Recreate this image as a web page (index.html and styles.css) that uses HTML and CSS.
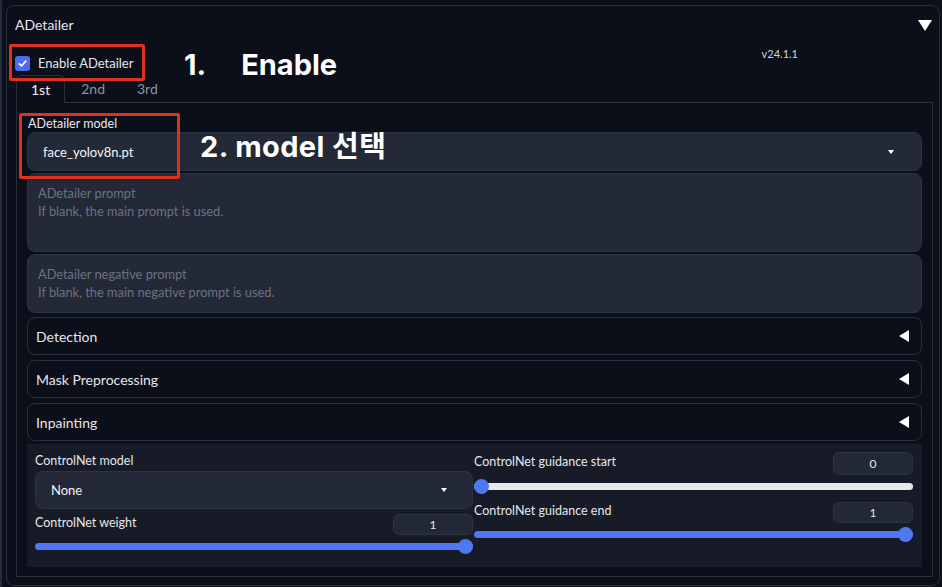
FILE: index.html
```html
<!DOCTYPE html>
<html lang="en">
<head>
<meta charset="utf-8">
<title>ADetailer</title>
<link rel="stylesheet" href="styles.css">
</head>
<body>
<div class="frame">
  <div class="panel">
    <div class="panel-head">
      <span class="panel-title">ADetailer</span>
      <span class="tri-down"></span>
    </div>
    <div class="enable-row">
      <label class="chk">
        <span class="chk-box"><svg width="11" height="11" viewBox="0 0 12 12"><path d="M2.5 6.3 L5 8.6 L9.6 3.4" fill="none" stroke="#fff" stroke-width="1.8" stroke-linecap="round" stroke-linejoin="round"/></svg></span>
        <span>Enable ADetailer</span>
      </label>
      <span class="ver">v24.1.1</span>
    </div>
    <div class="tabs">
      <div class="tab-nav">
        <div class="tab active">1st</div>
        <div class="tab">2nd</div>
        <div class="tab">3rd</div>
        <div class="tab-fill"></div>
      </div>
      <div class="tab-body">
        <div class="field-label">ADetailer model</div>
        <div class="dropdown big">
          <span>face_yolov8n.pt</span>
          <span class="dd-arrow"></span>
        </div>
        <div class="textarea tall">
          <div>ADetailer prompt</div>
          <div>If blank, the main prompt is used.</div>
        </div>
        <div class="textarea short">
          <div>ADetailer negative prompt</div>
          <div>If blank, the main negative prompt is used.</div>
        </div>
        <div class="accordion"><span>Detection</span><span class="tri-left"></span></div>
        <div class="accordion"><span>Mask Preprocessing</span><span class="tri-left"></span></div>
        <div class="accordion"><span>Inpainting</span><span class="tri-left"></span></div>
        <div class="cn-block">
          <div class="cn-col left">
            <div class="field-label cn-label">ControlNet model</div>
            <div class="dropdown small">
              <span>None</span>
              <span class="dd-arrow"></span>
            </div>
            <div class="num-row w-row">
              <span class="field-label">ControlNet weight</span>
              <span class="num-box">1</span>
            </div>
            <div class="slider">
              <div class="track blue"></div>
              <span class="thumb" style="left: 100%"></span>
            </div>
          </div>
          <div class="cn-col right">
            <div class="num-row s-row">
              <span class="field-label">ControlNet guidance start</span>
              <span class="num-box tall-box">0</span>
            </div>
            <div class="slider">
              <div class="track white"></div>
              <span class="thumb" style="left: 0%"></span>
            </div>
            <div class="num-row e-row">
              <span class="field-label">ControlNet guidance end</span>
              <span class="num-box">1</span>
            </div>
            <div class="slider">
              <div class="track blue"></div>
              <span class="thumb" style="left: 100%"></span>
            </div>
          </div>
        </div>
      </div>
    </div>
  </div>
  <div class="mark mark-1"></div>
  <div class="mark mark-2"></div>
  <div class="note note-1"><span>1.</span><span class="note-gap">Enable</span></div>
  <div class="note note-2">2. model 선택</div>
</div>
</body>
</html>
```
FILE: styles.css
```css
* { box-sizing: border-box; }
html, body {
  margin: 0;
  padding: 0;
  background: #0b0f19;
}
body {
  width: 942px;
  height: 587px;
  overflow: hidden;
  font-family: "Lato", "Liberation Sans", sans-serif;
  color: #e5e7eb;
}
.frame {
  position: relative;
  width: 942px;
  height: 587px;
  border-left: 2px solid #262c39;
  padding: 5px 2px 0 4px;
}
.panel {
  height: 581px;
  border: 1px solid #2a2f3b;
  border-radius: 8px;
  padding: 0 7px 0 8px;
  background: #0b0f19;
}
.panel-head {
  display: flex;
  align-items: center;
  justify-content: space-between;
  padding-top: 9px;
  height: 29px;
}
.panel-title {
  font-size: 14px;
  line-height: 20px;
}
.tri-down {
  width: 0;
  height: 0;
  border-left: 7px solid transparent;
  border-right: 7px solid transparent;
  border-top: 11px solid #ffffff;
}
.enable-row {
  display: flex;
  align-items: flex-start;
  margin-top: 10px;
  height: 30px;
}
.chk {
  display: flex;
  align-items: center;
  gap: 8px;
  margin-top: 8px;
  font-size: 13px;
  line-height: 20px;
}
.chk-box {
  width: 15px;
  height: 15px;
  border-radius: 3px;
  background: #4c6cf0;
  display: flex;
  align-items: center;
  justify-content: center;
}
.ver {
  margin-left: auto;
  margin-right: 134px;
  font-size: 11px;
  line-height: 18px;
  color: #d1d5db;
}
.tabs {
  margin-left: 1px;
  margin-right: -1px;
}
.tab-nav {
  display: flex;
  height: 28px;
}
.tab {
  font-size: 14px;
  line-height: 27px;
  padding: 0 15px;
  color: #8b93a1;
  border-bottom: 1px solid #2a2f3b;
}
.tab.active {
  color: #f3f4f6;
  border: 1px solid #2a2f3b;
  border-bottom: none;
  border-radius: 5px 5px 0 0;
  padding: 0 14px;
}
.tab + .tab:not(.active) { padding: 0 16px; }
.tab-fill {
  flex: 1;
  border-bottom: 1px solid #2a2f3b;
}
.tab-body {
  height: 474px;
  border: 1px solid #2a2f3b;
  border-top: none;
  padding: 13px 10px 0 10px;
}
.field-label {
  font-size: 12.5px;
  line-height: 15px;
  color: #e5e7eb;
}
.tab-body > .field-label { padding-left: 1px; margin-bottom: 1px; }
.dropdown {
  display: flex;
  align-items: center;
  justify-content: space-between;
  background: #232936;
  border: 1px solid #2c3341;
  border-radius: 8px;
  font-size: 13px;
  color: #f3f4f6;
}
.dropdown.big {
  height: 39px;
  padding: 0 27px 0 15px;
}
.dd-arrow {
  width: 0;
  height: 0;
  border-left: 3.5px solid transparent;
  border-right: 3.5px solid transparent;
  border-top: 4px solid #ffffff;
}
.textarea {
  margin-top: 2px;
  background: #232936;
  border: 1px solid #2c3341;
  border-radius: 8px;
  padding: 10px 10px 0 10px;
  font-size: 12.8px;
  line-height: 18px;
  color: #6b7383;
}
.textarea.tall { height: 79px; }
.textarea.short { height: 59px; }
.accordion {
  display: flex;
  align-items: center;
  justify-content: space-between;
  height: 38px;
  border: 1px solid #2a2f3b;
  border-radius: 8px;
  padding: 0 12px 0 8px;
  font-size: 14px;
  color: #e5e7eb;
  margin-top: 5px;
}
.textarea + .accordion { margin-top: 4px; }
.tri-left {
  width: 0;
  height: 0;
  border-top: 6px solid transparent;
  border-bottom: 6px solid transparent;
  border-right: 10px solid #ffffff;
}
.cn-block {
  margin-top: 3px;
  height: 123px;
  background: #161b27;
  display: flex;
  gap: 1px;
  padding: 8px 9px 0 8px;
}
.cn-col { flex: 1; display: flex; flex-direction: column; }
.cn-col.left { flex: 0 0 438px; }
.cn-label { margin-top: 1px; line-height: 16px; }
.dropdown.small {
  margin-top: 2px;
  height: 38px;
  padding: 0 25px 0 15px;
}
.num-row {
  display: flex;
  align-items: center;
  justify-content: space-between;
}
.w-row { margin-top: 5px; height: 21px; }
.s-row { height: 23px; }
.e-row { margin-top: 8px; height: 21px; }
.num-row .field-label { margin-top: -4px; }
.s-row .field-label { margin-top: -5px; }
.num-box {
  width: 80px;
  height: 21px;
  background: #222835;
  border: 1px solid #2c3341;
  border-radius: 6px;
  font-size: 12px;
  line-height: 19px;
  text-align: center;
  color: #e5e7eb;
}
.num-box.tall-box { height: 23px; line-height: 21px; }
.slider {
  position: relative;
  height: 16px;
  margin-top: 3px;
  display: flex;
  align-items: center;
}
.track {
  width: 100%;
  height: 7px;
  border-radius: 4px;
}
.track.blue { background: #4f78f2; }
.track.white { background: #e8e8ea; }
.thumb {
  position: absolute;
  top: 1px;
  width: 15px;
  height: 15px;
  border-radius: 50%;
  background: #4f78f2;
  transform: translateX(-100%);
}
.thumb[style*="left: 0%"] { transform: none; }
.mark {
  position: absolute;
  border: 3.5px solid #e0301e;
  border-radius: 2px;
}
.mark-1 { left: 7px; top: 44px; width: 136px; height: 37px; }
.mark-2 { left: 17px; top: 113px; width: 161px; height: 66px; }
.note {
  position: absolute;
  font-family: "Inter", "Noto Sans CJK KR", sans-serif;
  font-weight: 700;
  font-size: 29px;
  line-height: 29px;
  color: #ffffff;
  white-space: nowrap;
}
.note-1 { left: 182px; top: 50px; display: flex; }
.note-gap { margin-left: 35px; }
.note-2 { left: 198px; top: 132px; letter-spacing: 0.4px; }
```
